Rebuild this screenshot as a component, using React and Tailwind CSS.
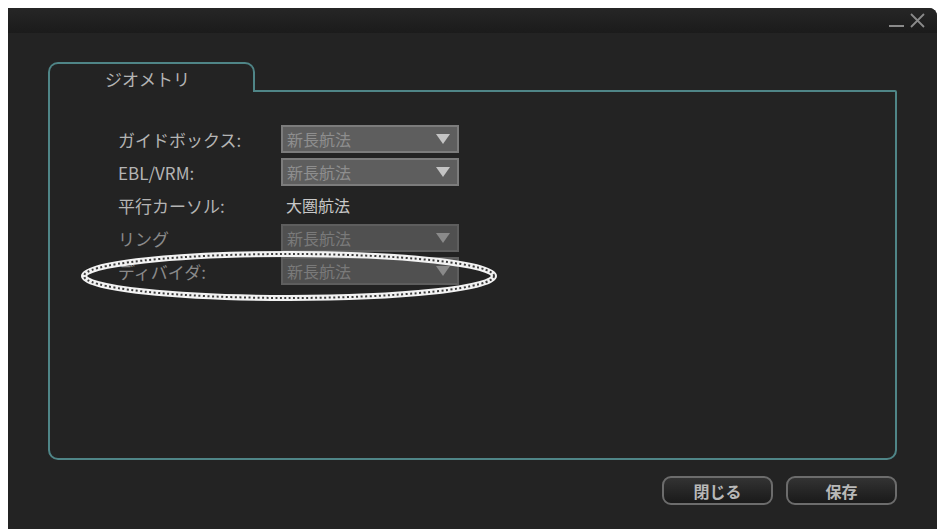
import React from "react";

const font = { fontFamily: '"Noto Sans CJK JP", "Noto Sans", sans-serif' };

function Select({ dim }) {
	return (
		<div
			className={
				"flex h-[28px] w-[178px] items-center justify-between border-2 pl-[4px] pr-[6px] " +
				(dim ? "border-[#5e5e5e] bg-[#505050]" : "border-[#7c7c7c] bg-[#5e5e5e]")
			}>
			<span className={"text-[16px] leading-none " + (dim ? "text-[#7a7a7a]" : "text-[#8e8e8e]")}>新長航法</span>
			<svg width="16" height="12" viewBox="0 0 16 12">
				<polygon points="1,1 15,1 8,11" fill={dim ? "#8a8a8a" : "#c4c4c4"} />
			</svg>
		</div>
	);
}

function Row({ label, dim, children }) {
	return (
		<div className="flex h-[28px] items-center">
			<div className={"w-[163px] text-[17px] leading-none " + (dim ? "text-[#8a8a8a]" : "text-[#b4b4b4]")}>{label}</div>
			{children}
		</div>
	);
}

export default function App() {
	return (
		<div className="h-[529px] w-[937px] overflow-hidden bg-white pl-[8px] pt-[8px]" style={font}>
			<div className="relative flex h-[540px] flex-col rounded-tr-[8px] bg-[#232323]">
				{/* title bar */}
				<div className="flex h-[25px] items-start justify-end rounded-tr-[8px] bg-gradient-to-b from-[#262626] to-[#1b1b1b] pr-[12px]">
					<div className="flex items-end gap-[6px] pt-[5px]">
						<span className="mb-[1px] block h-[2px] w-[15px] bg-[#8a8a8a]"></span>
						<svg width="15" height="15" viewBox="0 0 15 15">
							<path d="M1 1 L14 14 M14 1 L1 14" stroke="#8a8a8a" strokeWidth="1.8" />
						</svg>
					</div>
				</div>

				<div className="flex flex-col px-[40px] pt-[29px]">
					{/* tab */}
					<div className="relative z-10 -mb-[2px] flex h-[30px] w-[207px] items-center rounded-t-[10px] border-2 border-b-0 border-[#4f8587] bg-[#232323] pl-[55px]">
						<span className="text-[17px] leading-none text-[#b4b4b4]">ジオメトリ</span>
					</div>
					{/* panel */}
					<div className="flex h-[370px] flex-col gap-[5px] rounded-b-[10px] rounded-tr-[2px] border-2 border-[#4f8587] pl-[68px] pt-[33px]">
						<Row label="ガイドボックス:">
							<Select />
						</Row>
						<Row label="EBL/VRM:">
							<Select />
						</Row>
						<Row label="平行カーソル:">
							<span className="pl-[5px] text-[16px] leading-none text-[#c8c8c8]">大圏航法</span>
						</Row>
						<Row label="リング" dim>
							<Select dim />
						</Row>
						<Row label="ディバイダ:" dim>
							<Select dim />
						</Row>
					</div>

					{/* buttons */}
					<div className="flex justify-end gap-[13px] pt-[16px]">
						<button className="flex h-[29px] w-[111px] items-center justify-center rounded-[9px] border-2 border-[#6c6c6c] bg-gradient-to-b from-[#333333] to-[#1a1a1a] text-[16px] font-bold text-[#b8b8b8]">
							閉じる
						</button>
						<button className="flex h-[29px] w-[111px] items-center justify-center rounded-[9px] border-2 border-[#6c6c6c] bg-gradient-to-b from-[#333333] to-[#1a1a1a] text-[16px] font-bold text-[#b8b8b8]">
							保存
						</button>
					</div>
				</div>

				{/* annotation ellipse */}
				<svg className="pointer-events-none absolute left-[68px] top-[237px]" width="432" height="62" viewBox="0 0 432 62">
					<ellipse cx="213" cy="31" rx="205" ry="22" fill="none" stroke="#f2f2f2" strokeWidth="6" />
					<ellipse cx="213" cy="31" rx="205" ry="22" fill="none" stroke="#3a3a3a" strokeWidth="2" strokeDasharray="2 2.5" />
				</svg>
			</div>
		</div>
	);
}
